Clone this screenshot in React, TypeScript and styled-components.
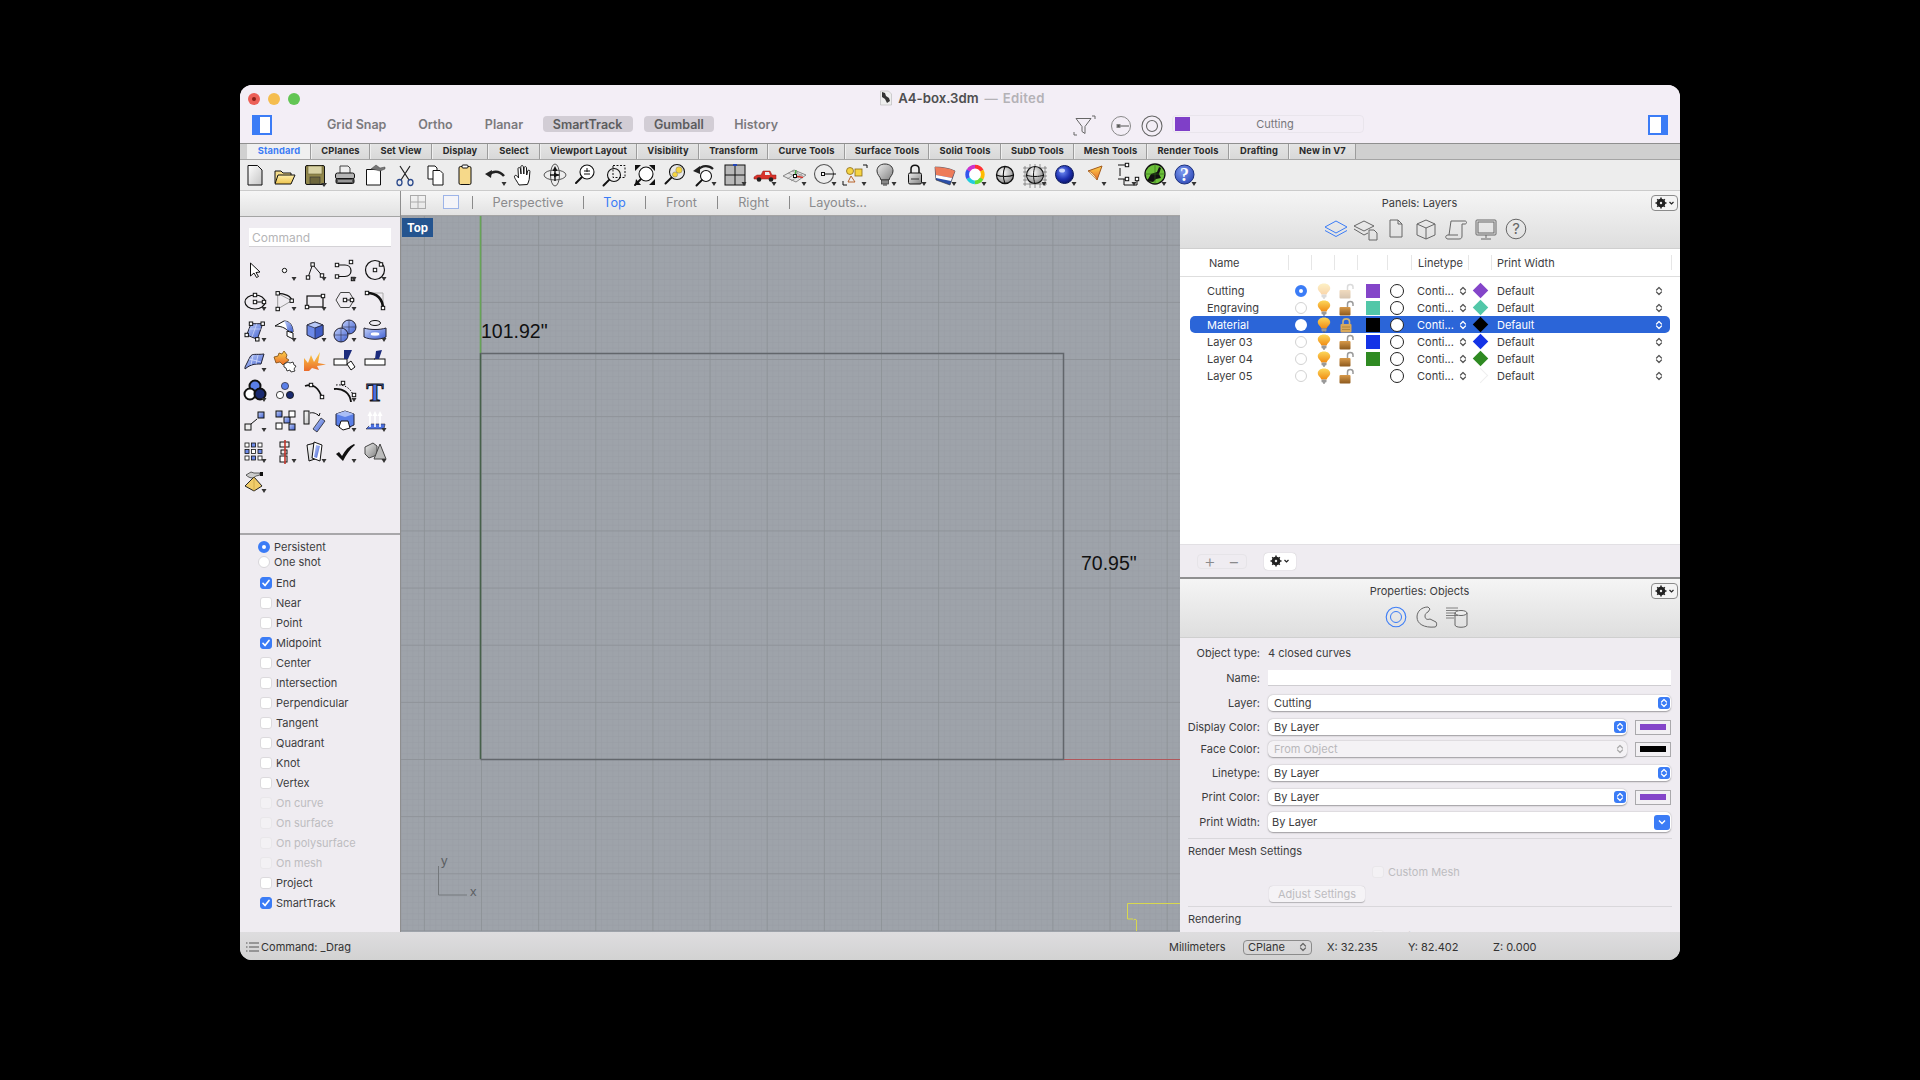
import React from "react";
import styled, { createGlobalStyle } from "styled-components";

const Global = createGlobalStyle`
  html, body { margin: 0; padding: 0; background: #000; }
  body { width: 1920px; height: 1080px; overflow: hidden; font-family: Inter, "Noto Sans", "Liberation Sans", sans-serif; color: #333; }
  #root { padding: 85px 0 0 240px; }
`;

const Win = styled.div`
  width: 1440px; height: 875px; display: flex; flex-direction: column;
  border-radius: 12px; overflow: hidden; background: #efecf1;
`;
const Chrome = styled.div`background: #f3eef6; height: 58px; flex: none;`;
const TitleRow = styled.div`
  height: 28px; display: grid; grid-template-columns: 1fr auto 1fr; align-items: center; padding: 0 8px;
`;
const Lights = styled.div`display: flex; gap: 8px; align-items: center;`;
const Light = styled.span<{ $c: string }>`
  width: 12px; height: 12px; border-radius: 50%; background: ${p => p.$c}; display: flex; align-items: center; justify-content: center;
`;
const LightDot = styled.span`width: 4px; height: 4px; border-radius: 50%; background: #8a1f18;`;
const Title = styled.div`display: flex; align-items: center; gap: 5px; font-size: 13.2px; font-weight: 600; color: #4e4e50; margin: -2px 0 0 4px;`;
const Dim = styled.span`color: #b4b2b6; margin-left: 1px; letter-spacing: .3px; word-spacing: 1px;`;
const NavRow = styled.div`height: 30px; display: flex; align-items: flex-start; padding: 2px 12px 0; `;
const NavBtn = styled.div<{ $w: number; $ml: number; $on?: boolean }>`
  width: ${p => p.$w}px; margin-left: ${p => p.$ml}px; height: 16px; margin-top: 1px; display: flex; align-items: center; justify-content: center;
  font-size: 12.5px; font-weight: 600; white-space: nowrap; border-radius: 4px;
  color: ${p => (p.$on ? "#5c5c5e" : "#7b7a7d")}; background: ${p => (p.$on ? "#d2cdd5" : "transparent")};
`;
const NavIcon = styled.svg<{ $ml: number; $w: number }>`display: block; margin-left: ${p => p.$ml}px; width: ${p => p.$w}px; height: 22px; flex: none;`;
const LayerBar = styled.div`
  margin-left: 9px; width: 192px; height: 18px; border: 1px solid #e9e5ec; border-radius: 4px; box-sizing: border-box;
  display: flex; align-items: center; padding-left: 2px; font-size: 11px; color: #77767a; flex: none;
`;
const LayerSwatch = styled.span`width: 15px; height: 14px; background: #7f3fc8; flex: none;`;
const LayerName = styled.span`flex: 1; text-align: center; padding-right: 3px;`;
const SideIcon = styled.div<{ $right?: boolean; $ml?: number }>`
  width: 20px; height: 20px; box-sizing: border-box; border: 2px solid #3b7cf6; flex: none; margin-left: ${p => p.$ml ?? 0}px;
  background: ${p => (p.$right ? "linear-gradient(90deg,#fff 0 70%,#3b7cf6 70%)" : "linear-gradient(90deg,#3b7cf6 0 35%,#fff 35%)")};
`;
const TabsRow = styled.div`
  flex: none; background: #d0d0d0; border-top: 1px solid #8f8f8f; border-bottom: 1px solid #a5a5a5; display: flex; padding-left: 7px; height: 15px;
`;
const Tab = styled.div<{ $w: number; $on?: boolean }>`
  width: ${p => p.$w}px; box-sizing: border-box; display: flex; align-items: center; justify-content: center; padding-bottom: 2px;
  font-size: 9.3px; font-weight: 700; letter-spacing: .15px; white-space: nowrap;
  color: ${p => (p.$on ? "#3b7cf6" : "#2a2a2a")};
  background: ${p => (p.$on ? "#f0f0f0" : "linear-gradient(#e4e4e4,#d8d8d8)")};
  border-right: 1px solid #9c9c9c; border-left: 1px solid #efefef;
`;
const Tools = styled.div`height: 30px; flex: none; background: #ededed; border-bottom: 1px solid #cbcbcb; display: flex;`;
const Slot = styled.svg`display: block; width: 30px; height: 30px; flex: none;`;
const Main = styled.div`flex: 1; min-height: 0; display: flex;`;
const Left = styled.div`width: 160px; flex: none; display: flex; flex-direction: column; background: #efecf1;`;
const HeadBar = styled.div`
  height: 25px; flex: none; background: linear-gradient(#f6f6f6,#e2e2e2); border-bottom: 1px solid #a4a4a4; display: flex; align-items: center;
`;
const CmdInput = styled.div`
  margin: 11px 0 0 9px; width: 142px; height: 19px; background: #fff; border-bottom: 1px solid #d4d2d6; box-sizing: border-box;
  font-size: 12px; color: #b5b5b7; padding: 2px 3px; flex: none;
`;
const IconGrid = styled.div`display: grid; grid-template-columns: repeat(5, 30px); grid-auto-rows: 30.3px; margin-top: 8px; height: 270px; flex: none;`;
const Split = styled.div`height: 2px; background: #a8a7aa; margin-top: 8px; flex: none;`;
const Snaps = styled.div`padding-top: 4px; display: flex; flex-direction: column;`;
const RadioRow = styled.div`height: 15.5px; display: flex; align-items: center; gap: 4px; padding-left: 18px; font-size: 11px; color: #3c3c3e;`;
const RadioDot = styled.span<{ $on?: boolean; $dis?: boolean }>`
  width: 12px; height: 12px; border-radius: 50%; box-sizing: border-box; flex: none; background: #fff;
  border: ${p => (p.$on ? "4px solid #3b7cf6" : "1px solid #d8d6da")};
`;
const SnapRow = styled.div<{ $dis?: boolean; $first?: boolean }>`
  height: 20px; display: flex; align-items: center; gap: 4px; padding-left: 20px; font-size: 11px;
  margin-top: ${p => (p.$first ? 3 : 0)}px; color: ${p => (p.$dis ? "#bdbcc0" : "#3c3c3e")}; white-space: nowrap;
`;
const Check = styled.span<{ $on?: boolean; $dis?: boolean }>`
  width: 12px; height: 12px; border-radius: 3px; box-sizing: border-box; flex: none; display: flex; align-items: center; justify-content: center;
  background: ${p => (p.$on ? "#3b7cf6" : p.$dis ? "#f3f1f4" : "#fff")};
  border: 1px solid ${p => (p.$on ? "#3b7cf6" : p.$dis ? "#e9e7ea" : "#dcdadd")};
`;
const Center = styled.div`width: 780px; flex: none; display: flex; flex-direction: column; border-left: 1px solid #8e8e8e; box-sizing: border-box;`;
const ViewTabs = styled(HeadBar)`font-size: 12.7px; color: #8b8b8d; padding-bottom: 2px; box-sizing: border-box;`;
const ViewTab = styled.div<{ $w: number; $on?: boolean }>`
  width: ${p => p.$w}px; text-align: center; color: ${p => (p.$on ? "#3b7cf6" : "#8b8b8d")}; white-space: nowrap; flex: none;
`;
const VSep = styled.span<{ $ml?: number }>`width: 1px; height: 13px; background: #8a8a8a; flex: none; margin-left: ${p => p.$ml ?? 0}px;`;
const ViewIcon = styled.svg<{ $ml: number }>`display: block; width: 16px; height: 14px; flex: none; margin-left: ${p => p.$ml}px;`;
const Canvas = styled.div`flex: 1; position: relative; overflow: hidden; background: #9ea3aa;`;
const CanvasSvg = styled.svg`display: block; width: 779px; height: 715px;`;
const TopBadge = styled.div`
  position: absolute; left: 1px; top: 2px; width: 31px; height: 19px; background: #24548f; color: #fff;
  font-size: 11.5px; font-weight: 700; display: flex; align-items: center; justify-content: center;
`;
const DimText = styled.div<{ $x: number; $y: number }>`
  position: absolute; left: ${p => p.$x}px; top: ${p => p.$y}px; font: 19.5px "Liberation Sans", Arial, sans-serif; color: #111; white-space: nowrap;
`;
const AxisText = styled.div<{ $x: number; $y: number }>`
  position: absolute; left: ${p => p.$x}px; top: ${p => p.$y}px; font: 13px "Liberation Sans", Arial, sans-serif; color: #5c6064;
`;
const Right = styled.div`flex: 1; min-width: 0; display: flex; flex-direction: column; box-sizing: border-box; box-shadow: inset 1px 0 0 #b4b4b4;`;
const PanelHead = styled.div<{ $h: number }>`
  height: ${p => p.$h}px; flex: none; box-sizing: border-box; background: linear-gradient(#f5f5f5,#dedede); border-bottom: 1px solid #cfcfcf;
  position: relative; display: flex; flex-direction: column; align-items: center;
`;
const PanelTitle = styled.div`font-size: 11px; color: #3c3c3e; height: 24px; display: flex; align-items: center; padding-right: 21px;`;
const PanelIcons = styled.div`display: flex; margin-top: -1px; padding-right: 9px;`;
const GearBtn = styled.div<{ $top: number }>`
  position: absolute; right: 2px; top: ${p => p.$top}px; width: 27px; height: 16px; border: 1px solid #8b8b8b; border-radius: 4px; box-sizing: border-box; background: #f4f4f4;
  display: flex; align-items: center; justify-content: center;
`;
const LayerList = styled.div`height: 295px; flex: none; background: #fff;`;
const ColHead = styled.div`
  height: 28px; border-bottom: 1px solid #dedede; box-sizing: border-box; display: flex; align-items: center; font-size: 11px; color: #3c3c3e;
`;
const ColCell = styled.div<{ $w: number; $pl?: number }>`
  width: ${p => p.$w}px; height: 15px; box-sizing: border-box; display: flex; align-items: center; padding-left: ${p => p.$pl ?? 0}px;
  border-right: 1px solid #e6e6e6; flex: none; white-space: nowrap;
`;
const Rows = styled.div`padding-top: 5px; padding-left: 10px;`;
const LRow = styled.div<{ $sel?: boolean }>`
  width: 480px; height: 17px; border-radius: 5px; display: flex; align-items: center; font-size: 11px;
  background: ${p => (p.$sel ? "#2b65d8" : "transparent")}; color: ${p => (p.$sel ? "#fff" : "#3c3c3e")};
`;
const LName = styled.div`width: 99px; padding-left: 17px; box-sizing: border-box; flex: none;`;
const LCell = styled.div<{ $w: number }>`width: ${p => p.$w}px; flex: none; display: flex; align-items: center; justify-content: center; white-space: nowrap;`;
const LRadio = styled.span<{ $on?: boolean; $sel?: boolean }>`
  width: 12px; height: 12px; border-radius: 50%; box-sizing: border-box; background: #fff;
  border: ${p => (p.$on ? "4px solid #3b7cf6" : p.$sel ? "0" : "1px solid #d2d2d2")};
`;
const LSwatch = styled.span<{ $c: string }>`width: 14px; height: 14px; background: ${p => p.$c};`;
const LCircle = styled.span`width: 14px; height: 14px; border-radius: 50%; border: 1px solid #222; background: #fff; box-sizing: border-box;`;
const LText = styled.div<{ $w: number; $ml: number }>`width: ${p => p.$w}px; margin-left: ${p => p.$ml}px; flex: none; box-sizing: border-box; white-space: nowrap; display: flex; align-items: center; justify-content: space-between;`;
const Diamond = styled.span<{ $c: string }>`width: 11px; height: 11px; transform: rotate(45deg); background: ${p => p.$c}; display: block;`;
const GhostDiamond = styled.span`width: 11px; height: 11px; transform: rotate(45deg); border-top: 1px solid #eee; border-right: 1px solid #eee; display: block; box-sizing: border-box;`;
const ListFoot = styled.div`
  height: 35px; flex: none; box-sizing: border-box; background: #efecf1; border-top: 1px solid #e2e0e4; border-bottom: 2px solid #8f8f90; display: flex; align-items: center; padding-left: 17px;
`;
const PlusMinus = styled.div`
  width: 50px; height: 15px; border: 1px solid #e6e4e8; border-radius: 4px; display: flex; align-items: center; box-sizing: border-box;
  font-size: 18px; color: #8a8a8c; font-weight: 300;
`;
const PMPart = styled.span`flex: 1; text-align: center; line-height: 13px;`;
const ActionBtn = styled.div`
  margin-left: 17px; width: 32px; height: 17px; background: #fff; border-radius: 4px; box-shadow: 0 0 1px #aaa; display: flex; align-items: center; justify-content: center;
`;
const PropBody = styled.div`flex: 1; min-height: 0; overflow: hidden; background: #efecf1; font-size: 11px; color: #3c3c3e;`;
const PRow = styled.div<{ $mt: number }>`height: 20px; margin-top: ${p => p.$mt}px; display: flex; align-items: center; padding-right: 9px;`;
const PLabel = styled.div`width: 80px; flex: none; text-align: right; margin-right: 8px; white-space: nowrap;`;
const TextField = styled.div`flex: 1; height: 16px; background: #fff; border-bottom: 1px solid #cfcdd1; box-sizing: border-box;`;
const Sel = styled.div<{ $dis?: boolean; $h?: number; $pl?: number }>`
  flex: 1; height: ${p => p.$h ?? 16}px; box-sizing: border-box; border-radius: 5px; background: ${p => (p.$dis ? "#f4f2f5" : "#fff")};
  box-shadow: 0 0.5px 1.5px rgba(0,0,0,.35); display: flex; align-items: center; justify-content: space-between; padding: 0 1px 0 ${p => p.$pl ?? 6}px;
  color: ${p => (p.$dis ? "#b9b8bb" : "#3c3c3e")};
`;
const Stepper = styled.span<{ $dis?: boolean; $w?: number }>`
  width: ${p => p.$w ?? 12}px; height: ${p => (p.$w ? 15 : 12)}px; border-radius: 3px; background: ${p => (p.$dis ? "transparent" : "#3b7cf6")}; display: flex; align-items: center; justify-content: center;
`;
const ColorBox = styled.div<{ $c: string }>`
  width: 36px; height: 15px; margin-left: 8px; border: 1px solid #aaa9ac; box-sizing: border-box; padding: 3.5px 4px; flex: none; background: #f2f0f3;
  &::after { content: ""; display: block; height: 100%; background: ${p => p.$c}; }
`;
const Rule = styled.div<{ $mt: number }>`height: 1px; background: #d9d7db; margin: ${p => p.$mt}px 8px 0 8px;`;
const Section = styled.div<{ $mt: number }>`margin: ${p => p.$mt}px 0 0 8px; height: 14px; line-height: 14px;`;
const DisRow = styled.div<{ $mt: number }>`margin: ${p => p.$mt}px 0 0 192px; height: 13px; display: flex; align-items: center; gap: 4px; color: #bdbcc0; white-space: nowrap;`;
const AdjustBtn = styled.div`
  margin: 8px 0 0 89px; width: 96px; height: 16px; border-radius: 4px; background: #f5f3f6; box-shadow: 0 0.5px 1px rgba(0,0,0,.25);
  color: #bdbcc0; display: flex; align-items: center; justify-content: center;
`;
const Status = styled.div`
  height: 28px; flex: none; box-sizing: border-box; padding-top: 2px; background: linear-gradient(#dedddf,#d2d2d2); display: flex; align-items: center; font-size: 11px; color: #333; white-space: nowrap;
`;
const StatusIcon = styled.svg`display: block; width: 14px; height: 12px; margin-left: 5px; flex: none;`;
const StatusItem = styled.div<{ $ml: number; $w?: number }>`margin-left: ${p => p.$ml}px; ${p => (p.$w ? `width:${p.$w}px;` : "")} flex: none;`;
const PlaneSel = styled.div`
  margin-left: 17px; width: 69px; height: 15px; border: 1px solid #8b8b8b; border-radius: 4px; box-sizing: border-box; display: flex; align-items: center; justify-content: space-between; padding: 0 4px; flex: none;
`;
const Defs = styled.svg`display: block; width: 0; height: 0;`;

const K = "#111";
const Ar = () => <polygon points="21.5,22 26.5,22 24,26" fill="#333" />;
const Sq = ({ x, y, s = 3.4, f = "#fff" }: { x: number; y: number; s?: number; f?: string }) => (
  <rect x={x - s / 2} y={y - s / 2} width={s} height={s} fill={f} stroke={K} strokeWidth="1" />
);
const Lens = ({ x = 17, y = 12, r = 6, fill = "#fff" }: { x?: number; y?: number; r?: number; fill?: string }) => (
  <>
    <circle cx={x} cy={y} r={r} fill={fill} stroke={K} strokeWidth="1.1" />
    <path d={`M${x - r * 0.75} ${y + r * 0.75}L${x - r - 4} ${y + r + 4}`} stroke={K} strokeWidth="2" strokeLinecap="round" />
  </>
);

const toolbar: [React.ReactNode, boolean?][] = [
  [<path d="M8 5.5h9.5L22 10v15H8z" fill="url(#gDoc)" stroke={K} />],
  [<><path d="M5 23V11h6l2 2h8v3" fill="#f5dd8c" stroke={K} /><path d="M5 24l3-9h17l-4 9z" fill="url(#gY)" stroke={K} /></>],
  [<><rect x="5.5" y="5.5" width="19" height="19" rx="1.5" fill="#91874c" stroke={K} /><rect x="8" y="6" width="14" height="8" fill="#d8d2a4" stroke="#6a6232" strokeWidth=".6" /><rect x="10" y="17" width="10" height="7" fill="#6d663c" stroke="#333" strokeWidth=".6" /><polygon points="21,23 27,23 24,27" fill="#333" /></>],
  [<><path d="M10 14V6h8l2 2v6z" fill="#eee" stroke="#444" /><rect x="5.5" y="13" width="19" height="6" rx="2" fill="#b5b5b5" stroke={K} /><rect x="6" y="18.5" width="18" height="5" rx="1.5" fill="#555" stroke={K} /><path d="M8 21h14" stroke="#ddd" /></>],
  [<><path d="M6.5 9.5h14V25h-14z" fill="#fff" stroke={K} /><path d="M11 9l5-4 4 3 5-1v2l-5 2-4-1z" fill="#777" stroke="#444" strokeWidth=".5" /></>],
  [<><path d="M10 6l9 14M20 6l-9 14" stroke="#222" strokeWidth="1.2" /><ellipse cx="9.5" cy="22.5" rx="2.5" ry="3" fill="none" stroke="#2c4a8c" strokeWidth="1.3" /><ellipse cx="20.5" cy="22.5" rx="2.5" ry="3" fill="none" stroke="#2c4a8c" strokeWidth="1.3" /></>],
  [<><path d="M8 6h7l2 2v11H8z" fill="#fff" stroke={K} /><path d="M13 10.5h7l3 3V25H13z" fill="#fff" stroke={K} /></>],
  [<><rect x="9" y="6.5" width="12" height="18" rx="1.5" fill="#f6d98a" stroke={K} /><rect x="12" y="5" width="6" height="3" rx="1" fill="#fff" stroke={K} /></>],
  [<><path d="M9 15c3-4 10-5 15 1" fill="none" stroke="#222" strokeWidth="2.5" /><polygon points="5,14 12,10 11,18" fill="#222" /><Ar /></>, true],
  [<path d="M9 25c-2-4-5-7-4.500-9 1-1.500 3 0 4 2l-.5-9c0-2 2-2 2.500 0l.5 5-.2-7c.2-2 2.300-2 2.600 0l.4 7 .3-6c.2-2 2.300-1.800 2.400 0l.2 7 1-4c.5-1.500 2.300-1 2.200.5l-.7 8c-.4 2-1 3-1.800 5z" fill="#fff" stroke={K} strokeWidth="1" />],
  [<><ellipse cx="15" cy="15" rx="11" ry="5" fill="none" stroke="#555" /><ellipse cx="15" cy="15" rx="4.500" ry="11" fill="none" stroke="#555" /><path d="M15 9v12M10 15h9" stroke={K} strokeWidth="1.4" /><polygon points="15,6 12.500,11 17.500,11" fill={K} /><polygon points="19,15 14,12.500 14,17.500" fill={K} /></>],
  [<><Lens x={17} y={12} r={7} /><path d="M14 11h6M17 8v4M14 14h6" stroke={K} /></>],
  [<><Lens x={14} y={15} r={6.5} fill="#eee" /><rect x="13" y="5.500" width="12" height="12" fill="none" stroke={K} strokeDasharray="2 1.500" /></>],
  [<><Lens x={16} y={14} r={7} fill="#fff" /><path d="M5 5h6L5 11zM25 5h-6l6 6zM25 25h-6l6-6zM5 25l1-6 5 6z" fill={K} /></>],
  [<><Lens x={17} y={12} r={7.500} fill="#e8e8e8" /><circle cx="19" cy="10" r="3.200" fill="#f6d53f" stroke="#777" strokeWidth=".5" /><circle cx="15" cy="14.500" r="2.600" fill="#f6d53f" stroke="#777" strokeWidth=".5" /></>],
  [<><Lens x={16} y={16} r={5.500} /><path d="M8 10c4-5 11-5 15-1" fill="none" stroke="#222" strokeWidth="2.200" /><polygon points="3,11 10,6 10,14" fill="#222" /><Ar /></>, true],
  [<><rect x="5" y="5" width="20" height="20" fill="#b9b9b9" stroke={K} /><path d="M15 5v20M5 15h20" stroke={K} /><path d="M13 5h4" stroke="#2246b8" strokeWidth="2" /><Ar /></>, true],
  [<><path d="M4 17l3-2h4l2-4h7l2 4h4v4H4z" fill="#d8332a" stroke="#8a1d18" strokeWidth=".5" /><path d="M15 12h4l1 3h-5z" fill="#e9eef2" /><circle cx="9" cy="19.500" r="2.300" fill="#222" /><circle cx="21" cy="19.500" r="2.300" fill="#222" /><Ar /></>, true],
  [<><path d="M3 16l11-6 12 5-10 7z" fill="#e5e5e5" stroke="#888" /><path d="M8 13l11 5M12 11l11 5M7 19l11-7M11 21l11-7" stroke="#888" strokeWidth=".7" /><path d="M15 16l8 1.500" stroke="#d0322a" strokeWidth="1.300" /><path d="M15 16l1-6" stroke="#3eaa3c" strokeWidth="1.300" /><rect x="13.500" y="14.500" width="3" height="3" fill="#fff" stroke={K} /><Ar /></>, true],
  [<><circle cx="14" cy="14" r="9.500" fill="none" stroke="#555" strokeWidth="1.100" /><rect x="11.500" y="12.500" width="3" height="3" fill="#fff" stroke={K} /><path d="M14.500 14H26" stroke={K} /><Ar /></>, true],
  [<><circle cx="10" cy="11" r="3.500" fill="#f5d442" stroke="#8a6a1a" strokeWidth=".8" /><rect x="15" y="9" width="7" height="7" fill="#f5d442" stroke="#8a6a1a" strokeWidth=".8" /><polygon points="11,16 15,22 8,22" fill="none" stroke="#b7622a" /><path d="M3 21v4h4M23 5h4v3" fill="none" stroke={K} /><Ar /></>, true],
  [<><path d="M15 4c5 0 8 3 8 7 0 4-3 5-4 9h-8c-1-4-4-5-4-9 0-4 3-7 8-7z" fill="url(#gGray)" stroke="#333" /><rect x="11.500" y="20" width="7" height="4" fill="#888" stroke="#333" strokeWidth=".7" /><path d="M13 25h4" stroke="#333" /><Ar /></>, true],
  [<><path d="M11 13V9c0-5 8-5 8 0v4" fill="none" stroke={K} strokeWidth="1.500" /><rect x="8.500" y="13" width="13" height="11" rx="1.500" fill="url(#gGray)" stroke={K} /><path d="M11 19h8" stroke="#333" /><Ar /></>, true],
  [<><path d="M5 7c6 0 14 1 20 4l-5 14-14-5z" fill="#2a4ea8" stroke="#333" strokeWidth=".6" /><path d="M5 7c6 0 14 1 20 4l-3 7-16-3z" fill="#ee7c5a" /><path d="M6 15l16 3-1 3-15-3z" fill="#fff" /><Ar /></>, true],
  [<>
    <circle cx="15" cy="14.500" r="8" fill="#fff" stroke={K} strokeWidth=".5" />
    {["#f33", "#fb0", "#6d3", "#2cd", "#35e", "#c3c"].map((c, i) => (
      <circle key={c} cx="15" cy="14.500" r="7.800" fill="none" stroke={c} strokeWidth="3.800" strokeDasharray="8.200 40.800" strokeDashoffset={-i * 8.170} transform="rotate(-90 15 14.500)" />
    ))}
    <Ar />
  </>, true],
  [<><circle cx="15" cy="15" r="8.500" fill="url(#gSphere)" stroke={K} strokeWidth="1.300" /><path d="M6.500 15c4 2 13 2 17 0M15 6.500c-2 5-2 12 0 17" fill="none" stroke={K} strokeWidth="1.100" /></>],
  [<><path d="M5 6v20M10 4v24M15 4v24M20 4v24M25 6v20M3 8h24M3 12h24M3 16h24M3 20h24M3 24h24" stroke="#555" strokeWidth=".6" /><circle cx="15" cy="15" r="8.500" fill="url(#gSphere)" stroke={K} strokeWidth="1.100" /><path d="M6.500 15c4 2 13 2 17 0M15 6.500c-2 5-2 12 0 17" fill="none" stroke={K} /><Ar /></>, true],
  [<><circle cx="14.500" cy="14.500" r="9" fill="url(#gBlue)" stroke="#0d1a5c" /><ellipse cx="12" cy="10.500" rx="3" ry="2" fill="#dde6ff" opacity=".85" /><Ar /></>, true],
  [<><path d="M8 11l14-5-5 14z" fill="url(#gO)" stroke="#a3581a" /><path d="M8 11c3 0 8 5 9 9" fill="#fbe5b4" stroke="#a3581a" strokeWidth=".7" /><Ar /></>, true],
  [<><path d="M8 5h8M8 19h8M14 19v6M14 25h13M10 8v8" stroke={K} /><Sq x={17} y={5} /><Sq x={17} y={19} /><Sq x={27} y={19} /><path d="M27 21v4" stroke={K} /><Ar /></>, true],
  [<><circle cx="15" cy="14" r="10" fill="#6cc03a" stroke={K} strokeWidth="1.300" /><path d="M7 21l4-7 6-2 2-5 2 1-2 6 2 4-5 1-3 3z" fill="#111" /><path d="M15 4v20M5 14h20" stroke="#2f6a1a" strokeWidth=".6" /><Ar /></>, true],
  [<><circle cx="14.500" cy="14.500" r="9.500" fill="url(#gBlue2)" stroke="#1a2f7c" /><text x="14.500" y="21" fontFamily="Liberation Serif" fontSize="18" fontWeight="700" fill="#fff" textAnchor="middle">?</text><Ar /></>, true],
];

const B = "url(#gB)";
const left: [React.ReactNode, boolean?][] = [
  [<path d="M10.500 8v13l3.500-3 2.500 4.500 2-1L16 17.500l4-.5z" fill="#fff" stroke={K} strokeLinejoin="round" />],
  [<circle cx="14.500" cy="15.500" r="2.200" fill="#fff" stroke={K} />, true],
  [<><path d="M8 22.500l4.600-13L22 20.500" fill="none" stroke={K} /><Sq x={8} y={22.500} /><Sq x={12.600} y={9.500} /><Sq x={22} y={20.500} /></>, true],
  [<><path d="M7 10h8c8 0 8 11.500 0 11.500H7" fill="none" stroke={K} strokeWidth="1.200" /><Sq x={7} y={10} /><Sq x={21} y={7} /><Sq x={7} y={21.500} /><Sq x={23} y={24} f="#888" /></>, true],
  [<><circle cx="15" cy="15" r="9.500" fill="none" stroke={K} strokeWidth="1.200" /><Sq x={15} y={15} /><Sq x={21} y={9.500} /></>, true],
  [<><ellipse cx="15" cy="17" rx="10" ry="7" fill="none" stroke={K} strokeWidth="1.200" /><path d="M15 17h9" stroke={K} /><Sq x={15} y={10} /><Sq x={15} y={17} /><Sq x={24} y={17} /></>, true],
  [<><path d="M7.700 8.300l14 7.400-14 8.300z" fill="none" stroke="#999" /><path d="M7.700 8.300c7 0 14 3 14 7.400" fill="none" stroke={K} strokeWidth="1.200" /><Sq x={7.700} y={8.300} /><Sq x={7.700} y={24} /><Sq x={21.700} y={15.700} /></>, true],
  [<><rect x="7" y="11" width="16" height="11" fill="none" stroke={K} strokeWidth="1.200" /><Sq x={7} y={22} /><Sq x={23} y={11} /></>, true],
  [<><polygon points="6,15 10.500,7.500 19.500,7.500 24,15 19.500,22.500 10.500,22.500" fill="none" stroke="#444" /><path d="M15 15h9" stroke={K} /><Sq x={15} y={15} /><Sq x={22} y={15} /></>, true],
  [<><path d="M7 8h16v16" fill="none" stroke="#aaa" /><path d="M7 8c10 0 16 6 16 16" fill="none" stroke={K} strokeWidth="2.500" /><Sq x={7} y={8} /><Sq x={23} y={23} /></>],
  [<><polygon points="11,7.700 22.700,7.700 17.300,23.300 6.700,19" fill={B} stroke="#223" /><path d="M16.800 7.700L12 21M9 13l12 0" stroke="#dfe6ff" strokeWidth=".6" /><Sq x={11} y={7.700} /><Sq x={22.700} y={7.700} /><Sq x={17.300} y={23.300} /><Sq x={6.700} y={19} /></>, true],
  [<><path d="M5 10l9-5c6 0 9 5 9 11l-6-2C15 12 11 10 5 10z" fill="#fff" stroke={K} /><path d="M14 5c6 0 9 5 9 11l-6-2c0-3-1-6-3-9z" fill={B} /><path d="M17 15l6 2v6l-6-3z" fill="#fff" stroke={K} /></>, true],
  [<><polygon points="15,6 23,9 23,19 15,23 7,19 7,9" fill="#6d8ae8" stroke="#223" strokeLinejoin="round" /><polygon points="15,6 23,9 15,12 7,9" fill="#b9c9f8" stroke="#223" strokeWidth=".7" /><polygon points="15,12 23,9 23,19 15,23" fill="#3f5cc6" stroke="#223" strokeWidth=".7" /></>, true],
  [<><circle cx="19" cy="11" r="7" fill={B} stroke="#223" /><circle cx="11" cy="19" r="7" fill={B} stroke="#223" /><path d="M12 11h14M19 4v14M4 19h14M11 12v14" stroke="#223" strokeWidth=".5" /></>, true],
  [<><ellipse cx="15" cy="7" rx="5.500" ry="2.500" fill="none" stroke={K} /><path d="M4 12c6 2 16 2 22 0v9c-6 3-16 3-22 0z" fill={B} stroke="#223" /><ellipse cx="15" cy="18" rx="5" ry="2.200" fill="#fff" stroke="#6a88e8" /></>, true],
  [<><path d="M5 21l5-10c2-4 6-2 14-3l-3 10c-6 0-10 0-16 5z" fill={B} stroke="#223" /><path d="M9 13l12 3M13 9l-2 10M18 9l-2 9" stroke="#dfe6ff" strokeWidth=".7" /></>, true],
  [<><path d="M4 11l4-1 1-3 3 1 2-3 3 4-1 3 3 2-6 5-3-3-4 1z" fill="url(#gO)" stroke="#7a4a10" strokeWidth=".8" /><path d="M14 18l4-2 2 1 3-1 1 3 2 1-2 3 1 2-4 1-1-2-3 1-1-3-2-1z" fill="#fff" stroke={K} strokeWidth=".8" /></>],
  [<polygon points="4,25 4,12 8,17 11,9 14,16 20,6 18,17 26,18.500 17,20 19,24 12,22 9,25" fill="url(#gO)" stroke="none" />],
  [<><rect x="4" y="13" width="13" height="6" fill="#fff" stroke={K} /><polygon points="14,4 22,4 18,13 14,13" fill="#1c2b7c" /><polygon points="17,18 21,15 25,21 21,24" fill="#fff" stroke={K} /></>],
  [<><rect x="5" y="13" width="20" height="6" fill="#fff" stroke={K} /><path d="M15 13h-1" stroke={K} /><polygon points="15,13 16,5 22,4 19,13" fill="#1c2b7c" /></>],
  [<><circle cx="15" cy="10" r="5.500" fill="#5a7fe8" stroke={K} strokeWidth="2" /><circle cx="10" cy="18" r="5.500" fill="#fff" stroke={K} strokeWidth="2" /><circle cx="20" cy="18" r="5.500" fill="#1a2a70" stroke={K} strokeWidth="2" /></>, true],
  [<><circle cx="15" cy="10" r="3.600" fill="#5a7fe8" stroke="#223" strokeWidth=".7" /><circle cx="10" cy="19" r="3.600" fill="#fff" stroke={K} strokeWidth=".8" /><circle cx="20" cy="19" r="3.600" fill="#1a2a70" stroke={K} strokeWidth=".8" /></>],
  [<><path d="M5 10c8-3 14 2 17 12" fill="none" stroke={K} strokeWidth="1.800" /><Sq x={11} y={9} /><Sq x={22} y={21} /></>],
  [<><path d="M6 9c9-1 15 4 17 10" fill="none" stroke={K} strokeDasharray="1.500 1.500" /><path d="M4 13c9-1 16 4 17 13" fill="none" stroke={K} strokeWidth="1.800" /><Sq x={13} y={7} /><Sq x={24} y={19} /></>, true],
  [<text x="15" y="25" fontFamily="Liberation Serif" fontSize="26" fontWeight="700" fill="#4a6fe0" stroke="#111" strokeWidth=".9" textAnchor="middle">T</text>],
  [<><rect x="5" y="18" width="6" height="6" fill="#eee" stroke={K} /><rect x="18" y="6" width="6" height="6" fill={B} stroke={K} /><path d="M11 18l6-5" stroke={K} /></>, true],
  [<><rect x="6" y="5" width="6" height="6" fill={B} stroke={K} /><rect x="6" y="17" width="6" height="6" fill="#fff" stroke={K} /><rect x="14" y="11" width="6" height="6" fill={B} stroke={K} /><rect x="19" y="5" width="6" height="6" fill="#fff" stroke={K} /><rect x="19" y="18" width="6" height="6" fill={B} stroke={K} /></>],
  [<><rect x="4" y="5" width="5" height="13" fill="url(#gDoc)" stroke={K} /><path d="M10 7c4-1 7 1 9 3" fill="none" stroke={K} /><path d="M17 8l2 2 1-3" fill="none" stroke={K} /><polygon points="13,23 21,12 25,15 17,26" fill={B} stroke={K} strokeWidth=".7" /></>],
  [<><polygon points="15,5 24,8 24,19 15,23 6,19 6,8" fill="#5a7fe8" stroke="#223" /><polygon points="15,5 24,8 15,11 6,8" fill="#a9bdf6" /><polygon points="11,15 18,15 20,22 13,24 9,21" fill="#fff" stroke={K} /></>, true],
  [<><polygon points="6,23 11,18 25,18 24,23" fill="#4a6fe0" stroke="#223" strokeWidth=".6" /><path d="M10 21V9M15 21V9M20 21V9" stroke="#fff" strokeWidth="1.600" /><polygon points="10,5 7.500,10 12.500,10" fill="#fff" /><polygon points="15,5 12.500,10 17.500,10" fill="#fff" /><polygon points="20,5 17.500,10 22.500,10" fill="#fff" /></>, true],
  [<>{[0, 1, 2].map(r => [0, 1, 2].map(c => <rect key={`${r}${c}`} x={5 + c * 6.500} y={6 + r * 6.500} width="4" height="4" fill={(r + c) % 2 ? "#6d8ae8" : "#fff"} stroke={K} strokeWidth=".8" />))}</>, true],
  [<><rect x="10" y="5" width="9" height="5" fill="#eee" stroke={K} /><rect x="11" y="13" width="6" height="4" fill="#eee" stroke={K} /><rect x="10" y="19" width="7" height="6" fill="#fff" stroke={K} /><path d="M15 3v24" stroke="#c0342a" strokeWidth="1.600" /></>, true],
  [<><polygon points="7,8 15,6 15,22 9,24" fill="url(#gDoc)" stroke={K} /><polygon points="14,5 22,8 20,24 12,21" fill="#fff" stroke={K} /><polygon points="16,8 20,9 17,21 14,20" fill={B} /></>, true],
  [<path d="M6 17l3-2 3 4c3-6 7-10 12-12l1 1c-5 4-9 10-12 16z" fill="#111" />, true],
  [<><polygon points="5,10 13,6 17,9 17,18 9,21 5,17" fill="url(#gGray)" stroke="#444" /><polygon points="20,7 26,22 14,22" fill="#bbb" stroke="#444" /></>, true],
  [<><path d="M6 8l5-3 3 1h6v2l-4 1-3 2c-3 0-5-1-7-3z" fill="#ccc" stroke="#222" strokeWidth=".7" /><rect x="20" y="5" width="3" height="4" fill="#111" /><polygon points="14,10 22,19 14,24 5,19" fill="#f0cc6a" stroke="#222" /><path d="M14 10v14" stroke="#c09a3a" strokeWidth=".6" /></>, true],
];

const Tick = () => (
  <svg width="10" height="10" viewBox="0 0 10 10"><path d="M2 5.300l2 2.200L8 2.500" fill="none" stroke="#fff" strokeWidth="1.700" strokeLinecap="round" strokeLinejoin="round" /></svg>
);
const UpDown = ({ c = "#fff" }: { c?: string }) => (
  <svg width="8" height="10" viewBox="0 0 8 10"><path d="M1.500 4L4 1.500 6.500 4M1.500 6L4 8.500 6.500 6" fill="none" stroke={c} strokeWidth="1.200" strokeLinecap="round" strokeLinejoin="round" /></svg>
);
const Gear = () => (
  <svg width="20" height="12" viewBox="0 0 20 12">
    <circle cx="6" cy="6" r="3.200" fill="none" stroke="#222" strokeWidth="2.300" />
    <path d="M6 .5v11M.5 6h11M2.200 2.200l7.600 7.600M9.800 2.200L2.200 9.800" stroke="#222" strokeWidth="1.500" />
    <circle cx="6" cy="6" r="1.200" fill="#eee" />
    <path d="M14.500 5l2 2 2-2" fill="none" stroke="#222" strokeWidth="1.200" />
  </svg>
);
const Bulb = ({ dim }: { dim?: boolean }) => (
  <svg width="14" height="16" viewBox="0 0 14 16" opacity={dim ? 0.35 : 1}>
    <path d="M7 .5c4 0 6.200 2.200 6.200 4.800 0 2.700-2.700 3.600-3.500 6.200H4.300C3.500 8.900.8 8 .8 5.300.8 2.700 3 .5 7 .5z" fill="url(#gBulb)" />
    <rect x="4.500" y="11.500" width="5" height="3" rx="1" fill="#999" />
    <path d="M6 15h2" stroke="#666" />
  </svg>
);
const Lock = ({ closed, dim }: { closed?: boolean; dim?: boolean }) => (
  <svg width="15" height="16" viewBox="0 0 15 16" opacity={dim ? 0.35 : 1}>
    {closed ? <path d="M4 8V4.500C4 1 10.500 1 10.500 4.500V8" fill="none" stroke="#c9b27c" strokeWidth="1.600" /> : <path d="M8.500 7V4C8.500.8 14 .8 14 4v2" fill="none" stroke="#9a9a9a" strokeWidth="1.500" />}
    <rect x={closed ? 1.500 : 0.500} y="7" width="11" height="8.500" rx="1" fill={closed ? "#d8a85a" : "url(#gLock)"} />
    {closed && <path d="M3 10h8M3 12.500h8" stroke="#a77a30" strokeWidth=".7" />}
  </svg>
);

const layers = [
  { n: "Cutting", c: "#8445c9", on: true, dim: true },
  { n: "Engraving", c: "#52c7a8" },
  { n: "Material", c: "#000", sel: true, closed: true },
  { n: "Layer 03", c: "#1433e6" },
  { n: "Layer 04", c: "#2f8a22" },
  { n: "Layer 05", c: "" },
];
const tabs: [string, number][] = [
  ["Standard", 64], ["CPlanes", 59], ["Set View", 62], ["Display", 56], ["Select", 52], ["Viewport Layout", 97], ["Visibility", 62],
  ["Transform", 69], ["Curve Tools", 77], ["Surface Tools", 84], ["Solid Tools", 72], ["SubD Tools", 73], ["Mesh Tools", 73], ["Render Tools", 82], ["Drafting", 60], ["New in V7", 67],
];
const snaps: [string, number][] = [
  ["End", 1], ["Near", 0], ["Point", 0], ["Midpoint", 1], ["Center", 0], ["Intersection", 0], ["Perpendicular", 0], ["Tangent", 0], ["Quadrant", 0], ["Knot", 0], ["Vertex", 0],
  ["On curve", 2], ["On surface", 2], ["On polysurface", 2], ["On mesh", 2], ["Project", 0], ["SmartTrack", 1],
];
const viewTabs: [string, number, boolean?][] = [["Perspective", 110], ["Top", 61, true], ["Front", 71], ["Right", 71], ["Layouts...", 96]];

const Glyph = ({ kids, stroke = "#666", blue }: { kids: React.ReactNode; stroke?: string; blue?: boolean }) => (
  <Slot viewBox="0 0 30 30" fill="none" stroke={blue ? "#3b7cf6" : stroke} strokeWidth="1">{kids}</Slot>
);

export default function App() {
  return (
    <>
      <Global />
      <Defs>
        <defs>
          <linearGradient id="gDoc" x1="0" y1="0" x2="1" y2="1"><stop offset="0" stopColor="#fff" /><stop offset="1" stopColor="#c4c4c4" /></linearGradient>
          <linearGradient id="gY" x1="0" y1="0" x2="0" y2="1"><stop offset="0" stopColor="#ffefab" /><stop offset="1" stopColor="#ecc24a" /></linearGradient>
          <linearGradient id="gO" x1="0" y1="0" x2="0" y2="1"><stop offset="0" stopColor="#fcd34a" /><stop offset="1" stopColor="#ea6a2a" /></linearGradient>
          <linearGradient id="gB" x1="0" y1="0" x2="1" y2="1"><stop offset="0" stopColor="#c2d0fa" /><stop offset="1" stopColor="#3f5fd0" /></linearGradient>
          <linearGradient id="gGray" x1="0" y1="0" x2="1" y2="1"><stop offset="0" stopColor="#eee" /><stop offset="1" stopColor="#808080" /></linearGradient>
          <linearGradient id="gBulb" x1="0" y1="0" x2="0" y2="1"><stop offset="0" stopColor="#fcd75a" /><stop offset="1" stopColor="#f08c14" /></linearGradient>
          <linearGradient id="gLock" x1="0" y1="0" x2="0" y2="1"><stop offset="0" stopColor="#d89a4a" /><stop offset="1" stopColor="#8d5a1e" /></linearGradient>
          <radialGradient id="gSphere" cx=".4" cy=".35" r=".7"><stop offset="0" stopColor="#fff" /><stop offset="1" stopColor="#888" /></radialGradient>
          <radialGradient id="gBlue" cx=".4" cy=".35" r=".7"><stop offset="0" stopColor="#6f8cf5" /><stop offset=".6" stopColor="#1c2fb0" /><stop offset="1" stopColor="#0a1260" /></radialGradient>
          <radialGradient id="gBlue2" cx=".4" cy=".35" r=".8"><stop offset="0" stopColor="#7d9af0" /><stop offset="1" stopColor="#2540b0" /></radialGradient>
          <pattern id="minor" width="5.714" height="5.714" patternUnits="userSpaceOnUse" x="80" y="543">
            <path d="M0 0H5.714M0 0V5.714" stroke="#979ca3" strokeWidth="1" fill="none" />
          </pattern>
          <pattern id="major" width="57.14" height="57.14" patternUnits="userSpaceOnUse" x="80" y="543">
            <path d="M0 0H57.14M0 0V57.14" stroke="#8b9095" strokeWidth="1.500" fill="none" />
          </pattern>
        </defs>
      </Defs>
      <Win>
        <Chrome>
          <TitleRow>
            <Lights>
              <Light $c="#ec5f57"><LightDot /></Light>
              <Light $c="#f5bd4f" />
              <Light $c="#62c554" />
            </Lights>
            <Title>
              <svg width="14" height="16" viewBox="0 0 14 16"><path d="M1.500 1h8l3 3v11h-11z" fill="#eee" stroke="#aaa" strokeWidth=".5" /><path d="M3 2l3 1 1 3 3 2 1 3-3 2-2-4-3-2z" fill="#333" /></svg>
              <span>A4-box.3dm</span><Dim>—&nbsp;Edited</Dim>
            </Title>
            <span />
          </TitleRow>
          <NavRow>
            <SideIcon />
            <NavBtn $w={60} $ml={55}>Grid Snap</NavBtn>
            <NavBtn $w={34} $ml={32}>Ortho</NavBtn>
            <NavBtn $w={40} $ml={32}>Planar</NavBtn>
            <NavBtn $w={92} $ml={19} $on>SmartTrack</NavBtn>
            <NavBtn $w={72} $ml={11} $on>Gumball</NavBtn>
            <NavBtn $w={44} $ml={20}>History</NavBtn>
            <NavIcon $ml={295} $w={24} viewBox="0 0 24 22" fill="none" stroke="#666" strokeWidth="1">
              <path d="M3 3.500h15l-6 8v7l-3-2v-5z" /><path d="M19 1h3v3M1 17v3h3" />
            </NavIcon>
            <NavIcon $ml={13} $w={22} viewBox="0 0 22 22" fill="none" stroke="#888" strokeWidth="1">
              <circle cx="11" cy="11" r="9.500" /><path d="M9 11h10" stroke="#555" /><rect x="7" y="9.500" width="3" height="3" fill="#555" />
            </NavIcon>
            <NavIcon $ml={9} $w={22} viewBox="0 0 22 22" fill="none" stroke="#666" strokeWidth="1.100">
              <circle cx="11" cy="11" r="10" /><circle cx="11" cy="11" r="5.500" />
            </NavIcon>
            <LayerBar><LayerSwatch /><LayerName>Cutting</LayerName></LayerBar>
            <SideIcon $right $ml={284} />
          </NavRow>
        </Chrome>
        <TabsRow>
          {tabs.map(([t, w], i) => <Tab key={t} $w={w} $on={i === 0}>{t}</Tab>)}
        </TabsRow>
        <Tools>
          {toolbar.map(([k], i) => <Slot key={i} viewBox="0 0 30 30">{k}</Slot>)}
        </Tools>
        <Main>
          <Left>
            <HeadBar />
            <CmdInput>Command</CmdInput>
            <IconGrid>
              {left.map(([k, more], i) => <Slot key={i} viewBox="0 0 30 30">{k}{more && <Ar />}</Slot>)}
            </IconGrid>
            <Split />
            <Snaps>
              <RadioRow><RadioDot $on />Persistent</RadioRow>
              <RadioRow><RadioDot />One shot</RadioRow>
              {snaps.map(([t, s], i) => (
                <SnapRow key={t} $first={i === 0} $dis={s === 2}>
                  <Check $on={s === 1} $dis={s === 2}>{s === 1 && <Tick />}</Check>{t}
                </SnapRow>
              ))}
            </Snaps>
          </Left>
          <Center>
            <ViewTabs>
              <ViewIcon $ml={9} viewBox="0 0 16 14"><rect x=".5" y=".5" width="15" height="13" fill="none" stroke="#aaa" /><path d="M8 0v14M0 7h16" stroke="#aaa" /></ViewIcon>
              <ViewIcon $ml={17} viewBox="0 0 16 14"><rect x=".5" y=".5" width="15" height="13" fill="#f4f4f8" stroke="#9db4e8" /></ViewIcon>
              <VSep $ml={13} />
              {viewTabs.map(([t, w, on], i) => (
                <React.Fragment key={t}>
                  <ViewTab $w={w} $on={on}>{t}</ViewTab>
                  {i < viewTabs.length - 1 && <VSep />}
                </React.Fragment>
              ))}
            </ViewTabs>
            <Canvas>
              <CanvasSvg viewBox="0 0 779 715">
                <rect width="779" height="715" fill="url(#minor)" />
                <rect width="779" height="715" fill="url(#major)" />
                <path d="M79.500 0V137" stroke="#66a356" strokeWidth="1.600" />
                <path d="M79.500 137V543" stroke="#46604a" strokeWidth="1.600" />
                <path d="M663 543.500H779" stroke="#b0565a" strokeWidth="1" />
                <path d="M79.500 137.500H662.500V543.500H79.500" fill="none" stroke="#62666b" strokeWidth="1.500" />
                <path d="M779 687.500H726.500V703H732M735.500 715V704a2 2 0 0 0-3 0" fill="none" stroke="#d8d84e" strokeWidth="1" />
                <path d="M37.500 650V679H66" fill="none" stroke="#74787c" strokeWidth="1" />
              </CanvasSvg>
              <TopBadge>Top</TopBadge>
              <DimText $x={80} $y={104}>101.92"</DimText>
              <DimText $x={680} $y={336}>70.95"</DimText>
              <AxisText $x={40} $y={637}>y</AxisText>
              <AxisText $x={69} $y={668}>x</AxisText>
            </Canvas>
          </Center>
          <Right>
            <PanelHead $h={58}>
              <PanelTitle>Panels: Layers</PanelTitle>
              <GearBtn $top={4}><Gear /></GearBtn>
              <PanelIcons>
                <Glyph blue kids={<><path d="M15 7l11 6-11 6-11-6z" /><path d="M4 16.500l11 6 11-6" /></>} />
                <Glyph kids={<><path d="M13 7l10 5-10 5-10-5z" /><path d="M3 15l10 6 4-2" /><path d="M18 16h5l3 3v7h-8z" /></>} />
                <Glyph kids={<path d="M9 6h8l4 4v13H9z M17 6v4h4" />} />
                <Glyph kids={<><path d="M15 6l9 4v11l-9 4-9-4V10z" /><path d="M6 10l9 4 9-4M15 14v11" /></>} />
                <Glyph kids={<path d="M10 7h14c2 0 2 3 0 3h-3v12c0 2-1 3-3 3H7c-3 0-3-4 0-4h1c1-5 1-9 2-14z M8 21h9" />} />
                <Glyph kids={<><rect x="5" y="6" width="20" height="15" rx="1" /><rect x="7" y="8" width="16" height="11" /><path d="M15 21v3M10 25h10" /></>} />
                <Glyph kids={<><circle cx="15" cy="15" r="9.800" /><text x="15" y="20" fontSize="15" textAnchor="middle" fill="#666" stroke="none" fontFamily="Inter">?</text></>} />
              </PanelIcons>
            </PanelHead>
            <LayerList>
              <ColHead>
                <ColCell $w={109} $pl={29}>Name</ColCell>
                <ColCell $w={23} /><ColCell $w={23} /><ColCell $w={23} /><ColCell $w={30} /><ColCell $w={24} />
                <ColCell $w={57} $pl={6}>Linetype</ColCell>
                <ColCell $w={23} />
                <ColCell $w={180} $pl={5}>Print Width</ColCell>
              </ColHead>
              <Rows>
                {layers.map(l => (
                  <LRow key={l.n} $sel={l.sel}>
                    <LName>{l.n}</LName>
                    <LCell $w={23}><LRadio $on={l.on} $sel={l.sel} /></LCell>
                    <LCell $w={23}><Bulb dim={l.dim} /></LCell>
                    <LCell $w={23}><Lock dim={l.dim} closed={l.closed} /></LCell>
                    <LCell $w={30}>{l.c && <LSwatch $c={l.c} />}</LCell>
                    <LCell $w={18}><LCircle /></LCell>
                    <LText $w={50} $ml={11}>Conti...<UpDown c={l.sel ? "#fff" : "#555"} /></LText>
                    <LCell $w={26}>{l.c ? <Diamond $c={l.c} /> : <GhostDiamond />}</LCell>
                    <LText $w={166} $ml={4}>Default<UpDown c={l.sel ? "#fff" : "#555"} /></LText>
                  </LRow>
                ))}
              </Rows>
            </LayerList>
            <ListFoot>
              <PlusMinus><PMPart>+</PMPart><PMPart>−</PMPart></PlusMinus>
              <ActionBtn><Gear /></ActionBtn>
            </ListFoot>
            <PanelHead $h={59}>
              <PanelTitle>Properties: Objects</PanelTitle>
              <GearBtn $top={4}><Gear /></GearBtn>
              <PanelIcons>
                <Glyph blue kids={<><circle cx="15" cy="15" r="9.800" strokeWidth="1.100" /><circle cx="15" cy="15" r="5.500" /></>} />
                <Glyph kids={<path d="M17 5c-6 0-11 4-11 10 0 7 7 11 18 10 2 0 2-4 1-5l-6-3c-3 1-5 0-5-3 0-2 1-3 3-4l2-3z" />} />
                <Glyph kids={<><path d="M5 6h12M5 8.500h12M5 11h12M5 13.500h12M5 16h8" strokeWidth=".8" /><ellipse cx="20" cy="11" rx="6" ry="2.500" fill="#eee" /><path d="M14 11v12c0 3 12 3 12 0V11" /></>} />
              </PanelIcons>
            </PanelHead>
            <PropBody>
              <PRow $mt={5}><PLabel>Object type:</PLabel>4 closed curves</PRow>
              <PRow $mt={5}><PLabel>Name:</PLabel><TextField /></PRow>
              <PRow $mt={5}><PLabel>Layer:</PLabel><Sel>Cutting<Stepper><UpDown /></Stepper></Sel></PRow>
              <PRow $mt={4}><PLabel>Display Color:</PLabel><Sel>By Layer<Stepper><UpDown /></Stepper></Sel><ColorBox $c="#8445c9" /></PRow>
              <PRow $mt={2}><PLabel>Face Color:</PLabel><Sel $dis>From Object<Stepper $dis><UpDown c="#aaa" /></Stepper></Sel><ColorBox $c="#000" /></PRow>
              <PRow $mt={4}><PLabel>Linetype:</PLabel><Sel>By Layer<Stepper><UpDown /></Stepper></Sel></PRow>
              <PRow $mt={4}><PLabel>Print Color:</PLabel><Sel>By Layer<Stepper><UpDown /></Stepper></Sel><ColorBox $c="#8445c9" /></PRow>
              <PRow $mt={5}>
                <PLabel>Print Width:</PLabel>
                <Sel $h={20} $pl={4}>By Layer<Stepper $w={16}><svg width="8" height="6" viewBox="0 0 8 6"><path d="M1 1.500L4 4.500 7 1.500" fill="none" stroke="#fff" strokeWidth="1.400" /></svg></Stepper></Sel>
              </PRow>
              <Rule $mt={6} />
              <Section $mt={5}>Render Mesh Settings</Section>
              <DisRow $mt={7}><Check $dis />Custom Mesh</DisRow>
              <AdjustBtn>Adjust Settings</AdjustBtn>
              <Rule $mt={4} />
              <Section $mt={5}>Rendering</Section>
              <DisRow $mt={3}><Check $dis />Cast shadows</DisRow>
            </PropBody>
          </Right>
        </Main>
        <Status>
          <StatusIcon viewBox="0 0 14 12"><path d="M4 2h10M4 6h10M4 10h10" stroke="#555" /><path d="M1 2h1.500M1 6h1.500M1 10h1.500" stroke="#555" /></StatusIcon>
          <StatusItem $ml={2} $w={905}>Command: _Drag</StatusItem>
          <StatusItem $ml={3} $w={57}>Millimeters</StatusItem>
          <PlaneSel>CPlane<UpDown c="#666" /></PlaneSel>
          <StatusItem $ml={15} $w={81}>X: 32.235</StatusItem>
          <StatusItem $ml={0} $w={85}>Y: 82.402</StatusItem>
          <StatusItem $ml={0}>Z: 0.000</StatusItem>
        </Status>
      </Win>
    </>
  );
}
